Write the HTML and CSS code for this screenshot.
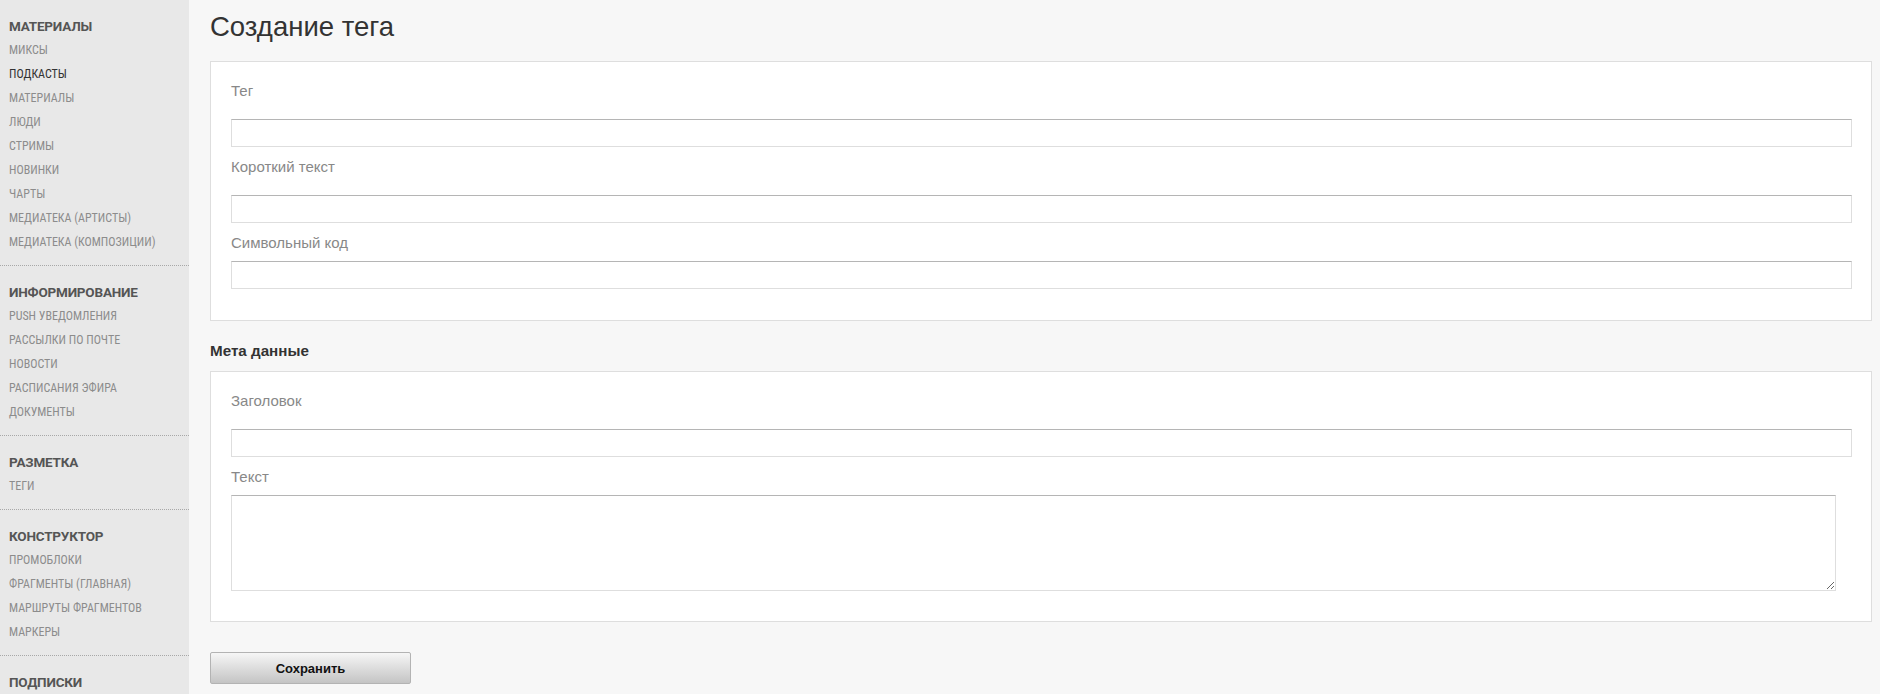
FILE: index.html
```html
<!DOCTYPE html>
<html lang="ru">
<head>
<meta charset="utf-8">
<title>Создание тега</title>
<link rel="stylesheet" href="styles.css">
</head>
<body>
<div class="layout">
  <aside class="sidebar">
    <section class="nav-section">
      <div class="nav-title">МАТЕРИАЛЫ</div>
      <a class="nav-item">МИКСЫ</a>
      <a class="nav-item active">ПОДКАСТЫ</a>
      <a class="nav-item">МАТЕРИАЛЫ</a>
      <a class="nav-item">ЛЮДИ</a>
      <a class="nav-item">СТРИМЫ</a>
      <a class="nav-item">НОВИНКИ</a>
      <a class="nav-item">ЧАРТЫ</a>
      <a class="nav-item">МЕДИАТЕКА (АРТИСТЫ)</a>
      <a class="nav-item">МЕДИАТЕКА (КОМПОЗИЦИИ)</a>
    </section>
    <section class="nav-section">
      <div class="nav-title">ИНФОРМИРОВАНИЕ</div>
      <a class="nav-item">PUSH УВЕДОМЛЕНИЯ</a>
      <a class="nav-item">РАССЫЛКИ ПО ПОЧТЕ</a>
      <a class="nav-item">НОВОСТИ</a>
      <a class="nav-item">РАСПИСАНИЯ ЭФИРА</a>
      <a class="nav-item">ДОКУМЕНТЫ</a>
    </section>
    <section class="nav-section">
      <div class="nav-title">РАЗМЕТКА</div>
      <a class="nav-item">ТЕГИ</a>
    </section>
    <section class="nav-section">
      <div class="nav-title">КОНСТРУКТОР</div>
      <a class="nav-item">ПРОМОБЛОКИ</a>
      <a class="nav-item">ФРАГМЕНТЫ (ГЛАВНАЯ)</a>
      <a class="nav-item">МАРШРУТЫ ФРАГМЕНТОВ</a>
      <a class="nav-item">МАРКЕРЫ</a>
    </section>
    <section class="nav-section">
      <div class="nav-title">ПОДПИСКИ</div>
    </section>
  </aside>
  <main class="main">
    <h1 class="page-title">Создание тега</h1>
    <div class="panel">
      <label class="field-label gap-lg">Тег</label>
      <input class="field-input" type="text">
      <label class="field-label gap-lg next">Короткий текст</label>
      <input class="field-input" type="text">
      <label class="field-label next">Символьный код</label>
      <input class="field-input" type="text">
    </div>
    <h2 class="section-title">Мета данные</h2>
    <div class="panel panel-meta">
      <label class="field-label gap-lg">Заголовок</label>
      <input class="field-input" type="text">
      <label class="field-label next">Текст</label>
      <textarea class="field-textarea"></textarea>
    </div>
    <button class="btn-save" type="button">Сохранить</button>
  </main>
</div>
</body>
</html>
```
FILE: styles.css
```css
html, body {
  margin: 0;
  padding: 0;
  height: 100%;
  overflow: hidden;
}
body {
  background: #f7f7f7;
  font-family: "Liberation Sans", Arial, sans-serif;
  color: #333;
}
.layout {
  display: flex;
  min-height: 100vh;
}
.sidebar {
  width: 189px;
  flex: 0 0 189px;
  background: #e8e8e8;
  font-family: "Roboto Condensed", Roboto, sans-serif;
}
.nav-section {
  display: flex;
  flex-direction: column;
  padding: 14px 0 11px 9px;
  border-bottom: 1px dotted #a8a8a8;
}
.nav-title {
  font-family: Roboto, sans-serif;
  font-size: 13.5px;
  font-weight: 700;
  line-height: 24px;
  color: #555;
  letter-spacing: -0.2px;
}
.nav-item {
  font-size: 12px;
  line-height: 24px;
  color: #8c8c8c;
  text-decoration: none;
}
.nav-item.active {
  color: #333;
}
.main {
  flex: 1;
  padding: 0 8px 0 21px;
}
.page-title {
  margin: 10px 0 17px;
  font-size: 27.5px;
  line-height: 34px;
  font-weight: 400;
  color: #333;
}
.panel {
  display: flex;
  flex-direction: column;
  align-items: flex-start;
  background: #fff;
  border: 1px solid #dedede;
  padding: 20px 19px 31px 20px;
}
.panel-meta {
  padding-bottom: 30px;
}
.field-label {
  font-size: 15px;
  line-height: 18px;
  color: #888;
  margin-bottom: 9px;
}
.field-label.gap-lg {
  margin-bottom: 19px;
}
.field-label.next {
  margin-top: 11px;
}
.field-input {
  box-sizing: border-box;
  width: 100%;
  height: 28px;
  margin: 0;
  padding: 2px 6px;
  border: 1px solid #dedede;
  border-top-color: #b5b5b5;
  background: #fff;
  font: 14px "Liberation Sans", Arial, sans-serif;
  outline: none;
}
.field-textarea {
  box-sizing: border-box;
  width: calc(100% - 16px);
  height: 96px;
  margin: 0;
  padding: 4px 6px;
  border: 1px solid #dedede;
  border-top-color: #b5b5b5;
  background: #fff;
  font: 14px "Liberation Sans", Arial, sans-serif;
  outline: none;
}
.section-title {
  margin: 20px 0 10px;
  font-size: 15.2px;
  line-height: 20px;
  font-weight: 700;
  color: #333;
}
.btn-save {
  display: block;
  margin-top: 30px;
  width: 201px;
  height: 32px;
  padding: 0;
  border: 1px solid #b3b3b3;
  border-radius: 2px;
  background: linear-gradient(#f6f6f6, #c4c4c4);
  font: 700 13px "Liberation Sans", Arial, sans-serif;
  color: #111;
  cursor: pointer;
}
```
